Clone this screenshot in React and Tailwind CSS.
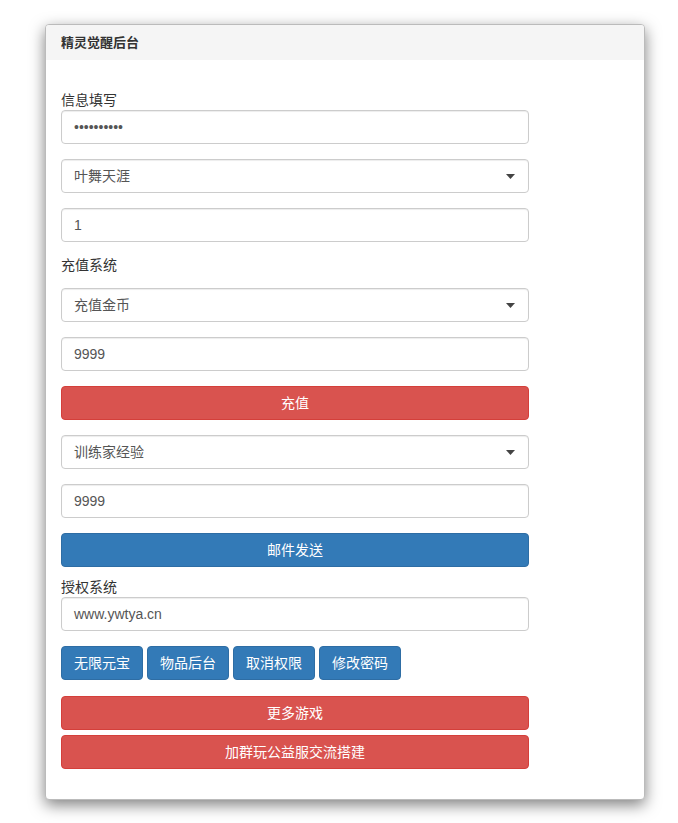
const font = { fontFamily: '"Liberation Sans", "Noto Sans CJK SC", sans-serif' };

function Field({ value, className = '' }) {
    return (
        <div
            className={`flex h-[34px] w-full items-center rounded-[4px] border border-[#ccc] bg-white px-3 text-[14px] text-[#555] shadow-[inset_0_1px_1px_rgba(0,0,0,0.075)] ${className}`}
        >
            {value}
        </div>
    );
}

function Select({ value }) {
    return (
        <div className="mb-[15px] flex h-[34px] w-full items-center justify-between rounded-[4px] border border-[#ccc] bg-white pl-3 pr-[12px] text-[14px] text-[#555] shadow-[inset_0_1px_1px_rgba(0,0,0,0.075)]">
            <span>{value}</span>
            <svg width="9" height="5" viewBox="0 0 9 5" className="mr-[1px]">
                <path d="M0 0 L9 0 L4.5 5 Z" fill="#444" />
            </svg>
        </div>
    );
}

function Btn({ children, color = 'red', className = '' }) {
    const colors =
        color === 'red'
            ? 'bg-[#d9534f] border-[#d43f3a]'
            : 'bg-[#337ab7] border-[#2e6da4]';
    return (
        <div
            className={`flex h-[34px] items-center justify-center rounded-[4px] border px-3 text-[14px] text-white ${colors} ${className}`}
        >
            {children}
        </div>
    );
}

export default function App() {
    return (
        <div className="min-h-[823px] bg-white pt-[24px]" style={font}>
            <div className="ml-[45px] w-[600px] overflow-hidden rounded-[4px] border border-[#bbb] bg-white shadow-[0_5px_15px_rgba(0,0,0,0.5)]">
                <div className="flex h-[35px] items-center bg-[#f5f5f5] px-[15px] text-[13px] font-bold text-[#333]">
                    精灵觉醒后台
                </div>

                <div className="w-[498px] px-[15px] pb-[30px] pt-[30px] text-[14px] text-[#333]">
                    <div className="leading-[20px]">信息填写</div>
                    <Field value="••••••••••" className="mb-[15px] text-[11px]" />
                    <Select value="叶舞天涯" />
                    <Field value="1" className="mb-[13px]" />

                    <div className="mb-[13px] leading-[20px]">充值系统</div>
                    <Select value="充值金币" />
                    <Field value="9999" className="mb-[15px]" />
                    <Btn className="mb-[15px] w-full">充值</Btn>

                    <Select value="训练家经验" />
                    <Field value="9999" className="mb-[15px]" />
                    <Btn color="blue" className="mb-[10px] w-full">
                        邮件发送
                    </Btn>

                    <div className="leading-[20px]">授权系统</div>
                    <Field value="www.ywtya.cn" className="mb-[15px]" />

                    <div className="mb-[16px] flex gap-[4px]">
                        <Btn color="blue" className="w-[82px]">无限元宝</Btn>
                        <Btn color="blue" className="w-[82px]">物品后台</Btn>
                        <Btn color="blue" className="w-[82px]">取消权限</Btn>
                        <Btn color="blue" className="w-[82px]">修改密码</Btn>
                    </div>

                    <Btn className="mb-[5px] w-full">更多游戏</Btn>
                    <Btn className="w-full">加群玩公益服交流搭建</Btn>
                </div>
            </div>
        </div>
    );
}
